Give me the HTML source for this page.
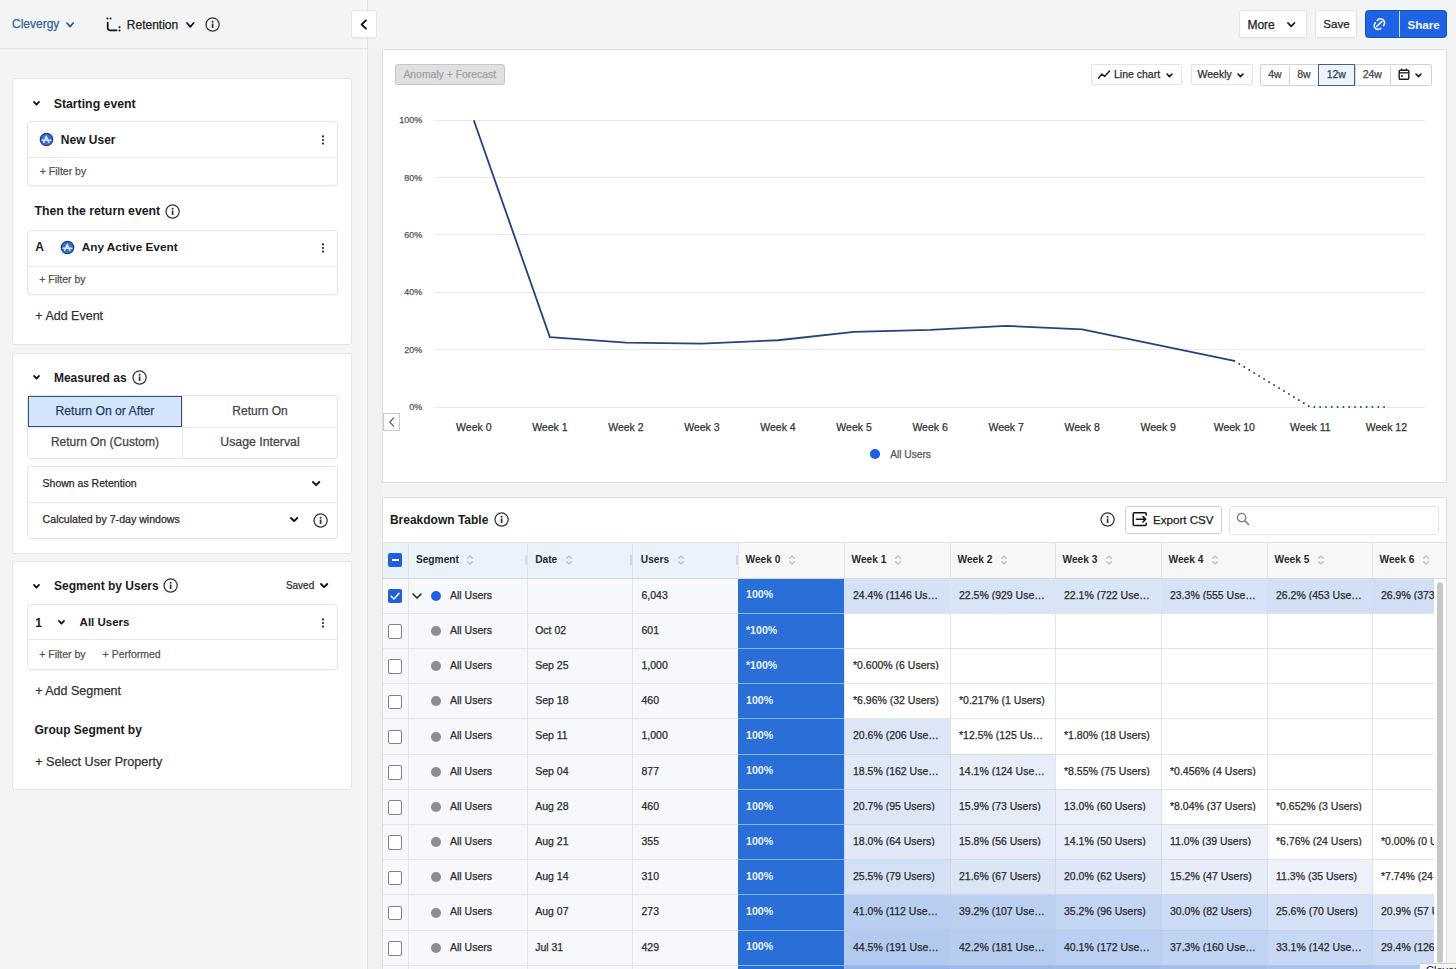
<!DOCTYPE html>
<html><head><meta charset="utf-8"><title>Retention</title>
<style>
html,body{margin:0;padding:0;}
body{width:1456px;height:969px;overflow:hidden;position:relative;background:#f3f4f6;font-family:"Liberation Sans", sans-serif;}
.t{position:absolute;white-space:nowrap;}
.n{-webkit-text-stroke:0.25px currentColor;}
.b{position:absolute;box-sizing:border-box;}
</style></head><body>
<div class="b" style="left:362px;top:0px;width:1px;height:969px;background:#eceef0;"></div>
<div class="b" style="left:363px;top:0px;width:4px;height:969px;background:#f6f7f9;"></div>
<div class="b" style="left:367px;top:0px;width:1px;height:969px;background:#e1e3e6;"></div>
<div class="b" style="left:368px;top:50px;width:14px;height:919px;background:#f0f1f3;"></div>
<div class="b" style="left:0;top:0;width:367px;height:49px;border-bottom:1px solid #e1e3e6;"></div>
<div class="t n" style="left:12.00px;top:18.44px;font-size:12px;line-height:12px;font-weight:normal;color:#3562a0;">Clevergy</div>
<svg class="b" style="left:64.9px;top:20.8px;" width="10.2" height="7.6" viewBox="0 0 10.2 7.6"><polyline points="2,2 5.1,5.6 8.2,2" fill="none" stroke="#2d5a96" stroke-width="1.7" stroke-linecap="round" stroke-linejoin="round"/></svg>
<svg class="b" style="left:104px;top:15px;" width="20" height="18" viewBox="0 0 20 18"><path d="M3.7 7.6 V13.1 Q3.7 15.3 5.9 15.3 H12.6" fill="none" stroke="#111" stroke-width="1.7" stroke-linecap="round"/><circle cx="3.4" cy="3.6" r="1" fill="#111"/><circle cx="6.5" cy="3.6" r="1" fill="#111"/><circle cx="15.5" cy="12.3" r="1" fill="#111"/><circle cx="15.5" cy="15.4" r="1" fill="#111"/></svg>
<div class="t n" style="left:126.80px;top:18.54px;font-size:12px;line-height:12px;font-weight:normal;color:#222;">Retention</div>
<svg class="b" style="left:185.29999999999998px;top:20.8px;" width="10.6" height="7.8" viewBox="0 0 10.6 7.8"><polyline points="2,2 5.3,5.8 8.6,2" fill="none" stroke="#1b1b1b" stroke-width="1.8" stroke-linecap="round" stroke-linejoin="round"/></svg>
<svg class="b" style="left:204.4px;top:16.0px;" width="17.2" height="17.2" viewBox="0 0 17.2 17.2"><circle cx="8.6" cy="8.6" r="6.6" fill="none" stroke="#333" stroke-width="1.25"/><circle cx="8.6" cy="5.8" r="1.05" fill="#333"/><rect x="7.75" y="7.5" width="1.7" height="4.5" fill="#333"/></svg>
<div class="b" style="left:351px;top:10px;width:26px;height:27.5px;background:#fff;border:1px solid #e3e5e8;border-radius:2px;box-shadow:0 1px 1px rgba(0,0,0,0.05);"></div>
<svg class="b" style="left:358px;top:18px;" width="12" height="14" viewBox="0 0 12 14"><polyline points="8,2.3 3.6,6.5 8,10.7" fill="none" stroke="#111" stroke-width="1.8" stroke-linecap="round" stroke-linejoin="round"/></svg>
<div class="b" style="left:1239px;top:10px;width:68px;height:27.5px;background:#fff;border:1px solid #e3e5e8;border-radius:2px;box-shadow:0 1px 1px rgba(0,0,0,0.04);"></div>
<div class="t n" style="left:1247.40px;top:18.54px;font-size:12px;line-height:12px;font-weight:normal;color:#222;">More</div>
<svg class="b" style="left:1286.3999999999999px;top:20.8px;" width="10.4" height="7.4" viewBox="0 0 10.4 7.4"><polyline points="2,2 5.2,5.4 8.4,2" fill="none" stroke="#1b1b1b" stroke-width="1.8" stroke-linecap="round" stroke-linejoin="round"/></svg>
<div class="b" style="left:1315px;top:10px;width:42px;height:27.5px;background:#fff;border:1px solid #e3e5e8;border-radius:2px;box-shadow:0 1px 1px rgba(0,0,0,0.04);"></div>
<div class="t n" style="left:1323.30px;top:18.48px;font-size:11.6px;line-height:11.6px;font-weight:normal;color:#222;">Save</div>
<div class="b" style="left:1365px;top:10px;width:81.5px;height:27.5px;background:#1e62e6;border:1px solid #174fbf;border-radius:3.5px;"></div>
<div class="b" style="left:1399px;top:11px;width:1px;height:25.5px;background:#cfe0ff;"></div>
<svg class="b" style="left:1371px;top:16px;" width="16" height="16" viewBox="0 0 16 16"><g transform="translate(8.5 8.3) scale(1.15) translate(-8.5 -8.3)"><path d="M9.6 11.8 A3.32 3.32 0 0 1 4.9 7.1 M6.6 4.9 A3.55 3.55 0 0 1 12.1 9.4 M6.1 10.2 L10.4 5.9" fill="none" stroke="#e8f5ff" stroke-width="1.5" stroke-linecap="round"/></g></svg>
<div class="t" style="left:1407.50px;top:18.58px;font-size:11.6px;line-height:11.6px;font-weight:bold;color:#f4f9ff;">Share</div>
<div class="b" style="left:12px;top:78px;width:340px;height:267px;background:#fff;border:1px solid #e3e5e8;border-radius:3px;"></div>
<svg class="b" style="left:32.2px;top:100.10000000000001px;" width="9" height="6.6" viewBox="0 0 9 6.6"><polyline points="2,2 4.5,4.6 7,2" fill="none" stroke="#111" stroke-width="1.8" stroke-linecap="round" stroke-linejoin="round"/></svg>
<div class="t" style="left:53.70px;top:97.58px;font-size:12.3px;line-height:12.3px;font-weight:bold;color:#1b1b1b;">Starting event</div>
<div class="b" style="left:27px;top:121px;width:311px;height:65px;background:#fff;border:1px solid #e3e5e8;border-radius:4px;box-shadow:0 1px 1px rgba(0,0,0,0.04);"></div>
<div class="b" style="left:28px;top:157px;width:309px;height:1px;background:#e6e8eb;"></div>
<svg class="b" style="left:39.0px;top:131.5px;" width="15" height="15" viewBox="0 0 15 15"><circle cx="7.5" cy="7.5" r="6.2" fill="#3b6fd4" stroke="#1d3c8c" stroke-width="1.3"/><path d="M4.6 10.6 L7.2 4.2 L9.9 10.6 M3 8.2 L12 8.2" fill="none" stroke="#d6ecff" stroke-width="1.4" stroke-linecap="round" stroke-linejoin="round"/></svg>
<div class="t" style="left:60.80px;top:133.64px;font-size:12px;line-height:12px;font-weight:bold;color:#1b1b1b;">New User</div>
<svg class="b" style="left:320.3px;top:132.7px;" width="6" height="14" viewBox="0 0 6 14"><circle cx="3" cy="3.4" r="1.05" fill="#222"/><circle cx="3" cy="7" r="1.05" fill="#222"/><circle cx="3" cy="10.6" r="1.05" fill="#222"/></svg>
<div class="t n" style="left:39.80px;top:165.91px;font-size:10.5px;line-height:10.5px;font-weight:normal;color:#555;">+ Filter by</div>
<div class="t" style="left:34.50px;top:205.18px;font-size:12.3px;line-height:12.3px;font-weight:bold;color:#1b1b1b;">Then the return event</div>
<svg class="b" style="left:164.4px;top:202.6px;" width="17.2" height="17.2" viewBox="0 0 17.2 17.2"><circle cx="8.6" cy="8.6" r="6.6" fill="none" stroke="#333" stroke-width="1.25"/><circle cx="8.6" cy="5.8" r="1.05" fill="#333"/><rect x="7.75" y="7.5" width="1.7" height="4.5" fill="#333"/></svg>
<div class="b" style="left:27px;top:229.5px;width:311px;height:65px;background:#fff;border:1px solid #e3e5e8;border-radius:4px;box-shadow:0 1px 1px rgba(0,0,0,0.04);"></div>
<div class="b" style="left:28px;top:265.5px;width:309px;height:1px;background:#e6e8eb;"></div>
<div class="t" style="left:35.20px;top:241.44px;font-size:12px;line-height:12px;font-weight:bold;color:#1b1b1b;">A</div>
<svg class="b" style="left:59.7px;top:239.7px;" width="15" height="15" viewBox="0 0 15 15"><circle cx="7.5" cy="7.5" r="6.2" fill="#3b6fd4" stroke="#1d3c8c" stroke-width="1.3"/><path d="M4.6 10.6 L7.2 4.2 L9.9 10.6 M3 8.2 L12 8.2" fill="none" stroke="#d6ecff" stroke-width="1.4" stroke-linecap="round" stroke-linejoin="round"/></svg>
<div class="t" style="left:81.70px;top:241.61px;font-size:11.8px;line-height:11.8px;font-weight:bold;color:#1b1b1b;">Any Active Event</div>
<svg class="b" style="left:320.3px;top:240.7px;" width="6" height="14" viewBox="0 0 6 14"><circle cx="3" cy="3.4" r="1.05" fill="#222"/><circle cx="3" cy="7" r="1.05" fill="#222"/><circle cx="3" cy="10.6" r="1.05" fill="#222"/></svg>
<div class="t n" style="left:39.20px;top:274.31px;font-size:10.5px;line-height:10.5px;font-weight:normal;color:#555;">+ Filter by</div>
<div class="t n" style="left:35.30px;top:309.52px;font-size:12.5px;line-height:12.5px;font-weight:normal;color:#333;">+ Add Event</div>
<div class="b" style="left:12px;top:352.5px;width:340px;height:201px;background:#fff;border:1px solid #e3e5e8;border-radius:3px;"></div>
<svg class="b" style="left:32.2px;top:374.09999999999997px;" width="9" height="6.6" viewBox="0 0 9 6.6"><polyline points="2,2 4.5,4.6 7,2" fill="none" stroke="#111" stroke-width="1.8" stroke-linecap="round" stroke-linejoin="round"/></svg>
<div class="t" style="left:53.90px;top:371.74px;font-size:12px;line-height:12px;font-weight:bold;color:#1b1b1b;">Measured as</div>
<svg class="b" style="left:131.1px;top:368.7px;" width="17.2" height="17.2" viewBox="0 0 17.2 17.2"><circle cx="8.6" cy="8.6" r="6.6" fill="none" stroke="#333" stroke-width="1.25"/><circle cx="8.6" cy="5.8" r="1.05" fill="#333"/><rect x="7.75" y="7.5" width="1.7" height="4.5" fill="#333"/></svg>
<div class="b" style="left:27px;top:395px;width:311px;height:64px;background:#fff;border:1px solid #e3e5e8;border-radius:3px;"></div>
<div class="b" style="left:28px;top:426.5px;width:309px;height:1px;background:#e6e8eb;"></div>
<div class="b" style="left:182px;top:396px;width:1px;height:62px;background:#e6e8eb;"></div>
<div class="b" style="left:27.5px;top:395.5px;width:154.5px;height:31px;background:#d4e5fb;border:1px solid #38506f;"></div>
<div class="t n" style="left:-95.10px;width:400px;text-align:center;top:404.97px;font-size:12.2px;line-height:12.2px;font-weight:normal;color:#1f3d66;">Return On or After</div>
<div class="t n" style="left:60.00px;width:400px;text-align:center;top:405.14px;font-size:12px;line-height:12px;font-weight:normal;color:#444;">Return On</div>
<div class="t n" style="left:-95.10px;width:400px;text-align:center;top:436.24px;font-size:12px;line-height:12px;font-weight:normal;color:#444;">Return On (Custom)</div>
<div class="t n" style="left:60.00px;width:400px;text-align:center;top:435.98px;font-size:12.3px;line-height:12.3px;font-weight:normal;color:#444;">Usage Interval</div>
<div class="b" style="left:27px;top:466px;width:311px;height:72.5px;background:#fff;border:1px solid #e3e5e8;border-radius:4px;box-shadow:0 1px 1px rgba(0,0,0,0.04);"></div>
<div class="b" style="left:28px;top:501.5px;width:309px;height:1px;background:#e6e8eb;"></div>
<div class="t n" style="left:42.60px;top:478.41px;font-size:10.5px;line-height:10.5px;font-weight:normal;color:#2b2b2b;">Shown as Retention</div>
<svg class="b" style="left:310.85px;top:480.25px;" width="10.3" height="7.1" viewBox="0 0 10.3 7.1"><polyline points="2,2 5.15,5.1 8.3,2" fill="none" stroke="#111" stroke-width="1.9" stroke-linecap="round" stroke-linejoin="round"/></svg>
<div class="t n" style="left:42.60px;top:514.32px;font-size:10.6px;line-height:10.6px;font-weight:normal;color:#2b2b2b;">Calculated by 7-day windows</div>
<svg class="b" style="left:288.85px;top:516.45px;" width="10.3" height="7.1" viewBox="0 0 10.3 7.1"><polyline points="2,2 5.15,5.1 8.3,2" fill="none" stroke="#111" stroke-width="1.9" stroke-linecap="round" stroke-linejoin="round"/></svg>
<svg class="b" style="left:312.29999999999995px;top:511.6px;" width="17.2" height="17.2" viewBox="0 0 17.2 17.2"><circle cx="8.6" cy="8.6" r="6.6" fill="none" stroke="#333" stroke-width="1.25"/><circle cx="8.6" cy="5.8" r="1.05" fill="#333"/><rect x="7.75" y="7.5" width="1.7" height="4.5" fill="#333"/></svg>
<div class="b" style="left:12px;top:561px;width:340px;height:228.5px;background:#fff;border:1px solid #e3e5e8;border-radius:3px;"></div>
<svg class="b" style="left:32.2px;top:582.9000000000001px;" width="9" height="6.6" viewBox="0 0 9 6.6"><polyline points="2,2 4.5,4.6 7,2" fill="none" stroke="#111" stroke-width="1.8" stroke-linecap="round" stroke-linejoin="round"/></svg>
<div class="t" style="left:54.00px;top:580.04px;font-size:12px;line-height:12px;font-weight:bold;color:#1b1b1b;">Segment by Users</div>
<svg class="b" style="left:162.0px;top:577.4px;" width="17.2" height="17.2" viewBox="0 0 17.2 17.2"><circle cx="8.6" cy="8.6" r="6.6" fill="none" stroke="#333" stroke-width="1.25"/><circle cx="8.6" cy="5.8" r="1.05" fill="#333"/><rect x="7.75" y="7.5" width="1.7" height="4.5" fill="#333"/></svg>
<div class="t n" style="left:285.90px;top:581.13px;font-size:10px;line-height:10px;font-weight:normal;color:#333;">Saved</div>
<svg class="b" style="left:318.55px;top:582.0500000000001px;" width="10.3" height="7.1" viewBox="0 0 10.3 7.1"><polyline points="2,2 5.15,5.1 8.3,2" fill="none" stroke="#111" stroke-width="1.9" stroke-linecap="round" stroke-linejoin="round"/></svg>
<div class="b" style="left:27px;top:603.5px;width:311px;height:66.5px;background:#fff;border:1px solid #e3e5e8;border-radius:4px;box-shadow:0 1px 1px rgba(0,0,0,0.04);"></div>
<div class="b" style="left:28px;top:639px;width:309px;height:1px;background:#e6e8eb;"></div>
<div class="t" style="left:35.20px;top:616.64px;font-size:12px;line-height:12px;font-weight:bold;color:#1b1b1b;">1</div>
<svg class="b" style="left:57.1px;top:619.0px;" width="9" height="6.6" viewBox="0 0 9 6.6"><polyline points="2,2 4.5,4.6 7,2" fill="none" stroke="#111" stroke-width="1.8" stroke-linecap="round" stroke-linejoin="round"/></svg>
<div class="t" style="left:79.60px;top:617.06px;font-size:11.5px;line-height:11.5px;font-weight:bold;color:#1b1b1b;">All Users</div>
<svg class="b" style="left:320.3px;top:615.5px;" width="6" height="14" viewBox="0 0 6 14"><circle cx="3" cy="3.4" r="1.05" fill="#222"/><circle cx="3" cy="7" r="1.05" fill="#222"/><circle cx="3" cy="10.6" r="1.05" fill="#222"/></svg>
<div class="t n" style="left:39.20px;top:648.91px;font-size:10.5px;line-height:10.5px;font-weight:normal;color:#555;">+ Filter by</div>
<div class="t n" style="left:102.60px;top:648.91px;font-size:10.5px;line-height:10.5px;font-weight:normal;color:#555;">+ Performed</div>
<div class="t n" style="left:35.20px;top:684.91px;font-size:12.5px;line-height:12.5px;font-weight:normal;color:#333;">+ Add Segment</div>
<div class="t" style="left:34.50px;top:723.84px;font-size:12px;line-height:12px;font-weight:bold;color:#1b1b1b;">Group Segment by</div>
<div class="t n" style="left:35.20px;top:755.53px;font-size:12.6px;line-height:12.6px;font-weight:normal;color:#333;">+ Select User Property</div>
<div class="b" style="left:382px;top:49px;width:1065px;height:434px;background:#fff;border:1px solid #dcdfe2;border-radius:1px;"></div>
<div class="b" style="left:395px;top:64px;width:110px;height:21px;background:#dfe0e2;border:1px solid #c3c5c8;border-radius:3px;"></div>
<div class="t n" style="left:403.40px;top:69.79px;font-size:10.4px;line-height:10.4px;font-weight:normal;color:#a0a2a6;">Anomaly + Forecast</div>
<div class="b" style="left:1090.5px;top:64px;width:91px;height:21px;background:#fff;border:1px solid #e3e5e8;border-radius:2px;"></div>
<svg class="b" style="left:1096px;top:67px;" width="16" height="14" viewBox="0 0 16 14"><polyline points="2.5,11 6,7 8.5,9.5 13.5,4" fill="none" stroke="#222" stroke-width="1.5" stroke-linecap="round" stroke-linejoin="round"/></svg>
<div class="t n" style="left:1114.00px;top:69.01px;font-size:10.5px;line-height:10.5px;font-weight:normal;color:#2b2b2b;">Line chart</div>
<svg class="b" style="left:1164.5px;top:71.7px;" width="9" height="6.6" viewBox="0 0 9 6.6"><polyline points="2,2 4.5,4.6 7,2" fill="none" stroke="#1b1b1b" stroke-width="1.6" stroke-linecap="round" stroke-linejoin="round"/></svg>
<div class="b" style="left:1190.5px;top:64px;width:62px;height:21px;background:#fff;border:1px solid #e3e5e8;border-radius:2px;"></div>
<div class="t n" style="left:1197.50px;top:69.01px;font-size:10.5px;line-height:10.5px;font-weight:normal;color:#2b2b2b;">Weekly</div>
<svg class="b" style="left:1235.5px;top:71.7px;" width="9" height="6.6" viewBox="0 0 9 6.6"><polyline points="2,2 4.5,4.6 7,2" fill="none" stroke="#1b1b1b" stroke-width="1.6" stroke-linecap="round" stroke-linejoin="round"/></svg>
<div class="b" style="left:1260px;top:64px;width:172px;height:21.5px;background:#fff;border:1px solid #cfd1d4;border-radius:2px;"></div>
<div class="b" style="left:1289px;top:65px;width:1px;height:20px;background:#d5d7da;"></div>
<div class="b" style="left:1354.5px;top:65px;width:1px;height:20px;background:#d5d7da;"></div>
<div class="b" style="left:1390px;top:65px;width:1px;height:20px;background:#d5d7da;"></div>
<div class="b" style="left:1318px;top:64px;width:37px;height:21.5px;background:#eef4fd;border:1px solid #4a5f82;"></div>
<div class="t n" style="left:1075.00px;width:400px;text-align:center;top:69.21px;font-size:10.5px;line-height:10.5px;font-weight:normal;color:#444;">4w</div>
<div class="t n" style="left:1104.00px;width:400px;text-align:center;top:69.21px;font-size:10.5px;line-height:10.5px;font-weight:normal;color:#444;">8w</div>
<div class="t n" style="left:1136.30px;width:400px;text-align:center;top:69.21px;font-size:10.5px;line-height:10.5px;font-weight:normal;color:#2c4266;">12w</div>
<div class="t n" style="left:1172.30px;width:400px;text-align:center;top:69.21px;font-size:10.5px;line-height:10.5px;font-weight:normal;color:#444;">24w</div>
<svg class="b" style="left:1397px;top:67px;" width="14" height="14" viewBox="0 0 14 14"><rect x="2.2" y="3.2" width="9.6" height="9" rx="1" fill="none" stroke="#1b1b1b" stroke-width="1.4"/><line x1="2.2" y1="5.8" x2="11.8" y2="5.8" stroke="#1b1b1b" stroke-width="1.3"/><line x1="4.6" y1="1.6" x2="4.6" y2="3.5" stroke="#1b1b1b" stroke-width="1.3"/><line x1="9.4" y1="1.6" x2="9.4" y2="3.5" stroke="#1b1b1b" stroke-width="1.3"/><circle cx="5" cy="9" r="1" fill="#1b1b1b"/></svg>
<svg class="b" style="left:1413.8px;top:71.7px;" width="9" height="6.6" viewBox="0 0 9 6.6"><polyline points="2,2 4.5,4.6 7,2" fill="none" stroke="#1b1b1b" stroke-width="1.6" stroke-linecap="round" stroke-linejoin="round"/></svg>
<div class="b" style="left:435px;top:120px;width:990px;height:1px;background:#e8e9eb;"></div>
<div class="t n" style="left:22.30px;width:400px;text-align:right;top:116.38px;font-size:9px;line-height:9px;font-weight:normal;color:#555;">100%</div>
<div class="b" style="left:435px;top:177px;width:990px;height:1px;background:#e8e9eb;"></div>
<div class="t n" style="left:22.30px;width:400px;text-align:right;top:173.73px;font-size:9px;line-height:9px;font-weight:normal;color:#555;">80%</div>
<div class="b" style="left:435px;top:234px;width:990px;height:1px;background:#e8e9eb;"></div>
<div class="t n" style="left:22.30px;width:400px;text-align:right;top:231.08px;font-size:9px;line-height:9px;font-weight:normal;color:#555;">60%</div>
<div class="b" style="left:435px;top:292px;width:990px;height:1px;background:#e8e9eb;"></div>
<div class="t n" style="left:22.30px;width:400px;text-align:right;top:288.43px;font-size:9px;line-height:9px;font-weight:normal;color:#555;">40%</div>
<div class="b" style="left:435px;top:349px;width:990px;height:1px;background:#e8e9eb;"></div>
<div class="t n" style="left:22.30px;width:400px;text-align:right;top:345.78px;font-size:9px;line-height:9px;font-weight:normal;color:#555;">20%</div>
<div class="b" style="left:435px;top:407px;width:990px;height:1px;background:#e8e9eb;"></div>
<div class="t n" style="left:22.30px;width:400px;text-align:right;top:403.13px;font-size:9px;line-height:9px;font-weight:normal;color:#555;">0%</div>
<div class="t n" style="left:273.80px;width:400px;text-align:center;top:422.01px;font-size:10.5px;line-height:10.5px;font-weight:normal;color:#333;">Week 0</div>
<div class="t n" style="left:349.85px;width:400px;text-align:center;top:422.01px;font-size:10.5px;line-height:10.5px;font-weight:normal;color:#333;">Week 1</div>
<div class="t n" style="left:425.90px;width:400px;text-align:center;top:422.01px;font-size:10.5px;line-height:10.5px;font-weight:normal;color:#333;">Week 2</div>
<div class="t n" style="left:501.95px;width:400px;text-align:center;top:422.01px;font-size:10.5px;line-height:10.5px;font-weight:normal;color:#333;">Week 3</div>
<div class="t n" style="left:578.00px;width:400px;text-align:center;top:422.01px;font-size:10.5px;line-height:10.5px;font-weight:normal;color:#333;">Week 4</div>
<div class="t n" style="left:654.05px;width:400px;text-align:center;top:422.01px;font-size:10.5px;line-height:10.5px;font-weight:normal;color:#333;">Week 5</div>
<div class="t n" style="left:730.10px;width:400px;text-align:center;top:422.01px;font-size:10.5px;line-height:10.5px;font-weight:normal;color:#333;">Week 6</div>
<div class="t n" style="left:806.15px;width:400px;text-align:center;top:422.01px;font-size:10.5px;line-height:10.5px;font-weight:normal;color:#333;">Week 7</div>
<div class="t n" style="left:882.20px;width:400px;text-align:center;top:422.01px;font-size:10.5px;line-height:10.5px;font-weight:normal;color:#333;">Week 8</div>
<div class="t n" style="left:958.25px;width:400px;text-align:center;top:422.01px;font-size:10.5px;line-height:10.5px;font-weight:normal;color:#333;">Week 9</div>
<div class="t n" style="left:1034.30px;width:400px;text-align:center;top:422.01px;font-size:10.5px;line-height:10.5px;font-weight:normal;color:#333;">Week 10</div>
<div class="t n" style="left:1110.35px;width:400px;text-align:center;top:422.01px;font-size:10.5px;line-height:10.5px;font-weight:normal;color:#333;">Week 11</div>
<div class="t n" style="left:1186.40px;width:400px;text-align:center;top:422.01px;font-size:10.5px;line-height:10.5px;font-weight:normal;color:#333;">Week 12</div>
<svg class="b" style="left:0;top:0" width="1456" height="969"><polyline points="473.80,120.30 549.85,337.08 625.90,342.53 701.95,343.68 778.00,340.24 854.05,331.92 930.10,329.91 1006.15,325.90 1082.20,329.34 1158.25,345.11 1234.30,360.88" fill="none" stroke="#28427c" stroke-width="1.8" stroke-linejoin="round"/><polyline points="1234.30,360.88 1310.35,407.05 1386.40,407.05" fill="none" stroke="#28427c" stroke-width="1.9" stroke-dasharray="0.01 5.8" stroke-linecap="round"/></svg>
<div class="b" style="left:383px;top:412.5px;width:17px;height:18px;background:#fff;border:1px solid #c8cacd;"></div>
<svg class="b" style="left:386px;top:416px;" width="12" height="12" viewBox="0 0 12 12"><polyline points="7.5,2 3.8,6 7.5,10" fill="none" stroke="#666" stroke-width="1.2" stroke-linecap="round"/></svg>
<svg class="b" style="left:869px;top:448px;" width="12" height="12" viewBox="0 0 12 12"><circle cx="6" cy="6" r="5.1" fill="#1f5fe6"/></svg>
<div class="t n" style="left:890.20px;top:449.76px;font-size:10.2px;line-height:10.2px;font-weight:normal;color:#555;">All Users</div>
<div class="b" style="left:382px;top:497px;width:1065px;height:480px;background:#fff;border:1px solid #dcdfe2;border-radius:1px;"></div>
<div class="t" style="left:389.90px;top:513.94px;font-size:12px;line-height:12px;font-weight:bold;color:#1b1b1b;">Breakdown Table</div>
<svg class="b" style="left:493.29999999999995px;top:510.6px;" width="17.2" height="17.2" viewBox="0 0 17.2 17.2"><circle cx="8.6" cy="8.6" r="6.6" fill="none" stroke="#333" stroke-width="1.25"/><circle cx="8.6" cy="5.8" r="1.05" fill="#333"/><rect x="7.75" y="7.5" width="1.7" height="4.5" fill="#333"/></svg>
<svg class="b" style="left:1099.2px;top:510.6px;" width="17.2" height="17.2" viewBox="0 0 17.2 17.2"><circle cx="8.6" cy="8.6" r="6.6" fill="none" stroke="#333" stroke-width="1.25"/><circle cx="8.6" cy="5.8" r="1.05" fill="#333"/><rect x="7.75" y="7.5" width="1.7" height="4.5" fill="#333"/></svg>
<div class="b" style="left:1124.5px;top:506px;width:97px;height:27.5px;background:#fff;border:1px solid #cfd1d4;border-radius:3px;"></div>
<svg class="b" style="left:1131px;top:511px;" width="18" height="18" viewBox="0 0 18 18"><path d="M15.2 3.9 V2.7 Q15.2 1.7 14.2 1.7 H3.2 Q2.2 1.7 2.2 2.7 V13.6 Q2.2 14.6 3.2 14.6 H14.2 Q15.2 14.6 15.2 13.6 V12.2" fill="none" stroke="#111" stroke-width="1.5" stroke-linecap="round"/><path d="M5.4 8.3 H14.4 M12 5.6 L14.7 8.3 L12 11" fill="none" stroke="#111" stroke-width="1.5" stroke-linecap="round" stroke-linejoin="round"/></svg>
<div class="t n" style="left:1153.00px;top:514.28px;font-size:11.6px;line-height:11.6px;font-weight:normal;color:#222;">Export CSV</div>
<div class="b" style="left:1229px;top:505.5px;width:210px;height:29px;background:#fff;border:1px solid #e3e5e8;border-radius:3px;"></div>
<svg class="b" style="left:1235px;top:511px;" width="16" height="16" viewBox="0 0 16 16"><circle cx="6.6" cy="6.6" r="4.2" fill="none" stroke="#777" stroke-width="1.3"/><line x1="9.7" y1="9.7" x2="13.6" y2="13.6" stroke="#777" stroke-width="1.4" stroke-linecap="round"/></svg>
<div class="b" style="left:383px;top:542px;width:1063px;height:427px;overflow:hidden;">
<div class="b" style="left:-1.00px;top:0.00px;width:356.00px;height:36.00px;background:#eaf2fc;"></div>
<div class="b" style="left:355.00px;top:0.00px;width:762.00px;height:36.00px;background:#f7f7f8;"></div>
<div class="b" style="left:-1.00px;top:0.00px;width:1200.00px;height:1.00px;background:#dfe1e4;"></div>
<div class="b" style="left:-1.00px;top:36.00px;width:1200.00px;height:1.00px;background:#d9dcdf;"></div>
<div class="b" style="left:25.00px;top:0.00px;width:1.00px;height:36.00px;background:#e0e3e6;"></div>
<div class="b" style="left:144.00px;top:0.00px;width:1.00px;height:36.00px;background:#e0e3e6;"></div>
<div class="b" style="left:249.00px;top:0.00px;width:1.00px;height:36.00px;background:#e0e3e6;"></div>
<div class="b" style="left:355.00px;top:0.00px;width:1.00px;height:36.00px;background:#e0e3e6;"></div>
<div class="b" style="left:461.00px;top:0.00px;width:1.00px;height:36.00px;background:#e0e3e6;"></div>
<div class="b" style="left:567.00px;top:0.00px;width:1.00px;height:36.00px;background:#e0e3e6;"></div>
<div class="b" style="left:672.00px;top:0.00px;width:1.00px;height:36.00px;background:#e0e3e6;"></div>
<div class="b" style="left:778.00px;top:0.00px;width:1.00px;height:36.00px;background:#e0e3e6;"></div>
<div class="b" style="left:884.00px;top:0.00px;width:1.00px;height:36.00px;background:#e0e3e6;"></div>
<div class="b" style="left:989.00px;top:0.00px;width:1.00px;height:36.00px;background:#e0e3e6;"></div>
<div class="b" style="left:1095.00px;top:0.00px;width:1.00px;height:36.00px;background:#e0e3e6;"></div>
<div class="b" style="left:142.00px;top:13.00px;width:2.00px;height:9.50px;background:#d3d6da;border-radius:1px;"></div>
<div class="b" style="left:247.00px;top:13.00px;width:2.00px;height:9.50px;background:#d3d6da;border-radius:1px;"></div>
<div class="b" style="left:353.00px;top:13.00px;width:2.00px;height:9.50px;background:#d3d6da;border-radius:1px;"></div>
<div class="b" style="left:5.00px;top:11.00px;width:14.00px;height:14.00px;background:#1f5fdc;border-radius:2px;"></div>
<div class="b" style="left:8.50px;top:17.30px;width:7.00px;height:1.50px;background:#fff;"></div>
<div class="t" style="left:32.90px;top:12.56px;font-size:10.2px;line-height:10.2px;font-weight:bold;color:#2a2a2a;">Segment<span style="position:relative;display:inline-block;width:15px;height:0"><svg style="position:absolute;left:7.5px;top:-9px" width="8" height="12" viewBox="0 0 8 12"><path d="M1.7 4.3 L4 2 L6.3 4.3" fill="none" stroke="#c0c2c5" stroke-width="1.4" stroke-linecap="round" stroke-linejoin="round"/><path d="M1.7 7.7 L4 10 L6.3 7.7" fill="none" stroke="#c0c2c5" stroke-width="1.4" stroke-linecap="round" stroke-linejoin="round"/></svg></span></div>
<div class="t" style="left:152.20px;top:12.56px;font-size:10.2px;line-height:10.2px;font-weight:bold;color:#2a2a2a;">Date<span style="position:relative;display:inline-block;width:15px;height:0"><svg style="position:absolute;left:7.5px;top:-9px" width="8" height="12" viewBox="0 0 8 12"><path d="M1.7 4.3 L4 2 L6.3 4.3" fill="none" stroke="#c0c2c5" stroke-width="1.4" stroke-linecap="round" stroke-linejoin="round"/><path d="M1.7 7.7 L4 10 L6.3 7.7" fill="none" stroke="#c0c2c5" stroke-width="1.4" stroke-linecap="round" stroke-linejoin="round"/></svg></span></div>
<div class="t" style="left:257.80px;top:12.56px;font-size:10.2px;line-height:10.2px;font-weight:bold;color:#2a2a2a;">Users<span style="position:relative;display:inline-block;width:15px;height:0"><svg style="position:absolute;left:7.5px;top:-9px" width="8" height="12" viewBox="0 0 8 12"><path d="M1.7 4.3 L4 2 L6.3 4.3" fill="none" stroke="#c0c2c5" stroke-width="1.4" stroke-linecap="round" stroke-linejoin="round"/><path d="M1.7 7.7 L4 10 L6.3 7.7" fill="none" stroke="#c0c2c5" stroke-width="1.4" stroke-linecap="round" stroke-linejoin="round"/></svg></span></div>
<div class="t" style="left:362.50px;top:12.56px;font-size:10.2px;line-height:10.2px;font-weight:bold;color:#2a2a2a;">Week 0<span style="position:relative;display:inline-block;width:15px;height:0"><svg style="position:absolute;left:7.5px;top:-9px" width="8" height="12" viewBox="0 0 8 12"><path d="M1.7 4.3 L4 2 L6.3 4.3" fill="none" stroke="#c0c2c5" stroke-width="1.4" stroke-linecap="round" stroke-linejoin="round"/><path d="M1.7 7.7 L4 10 L6.3 7.7" fill="none" stroke="#c0c2c5" stroke-width="1.4" stroke-linecap="round" stroke-linejoin="round"/></svg></span></div>
<div class="t" style="left:468.50px;top:12.56px;font-size:10.2px;line-height:10.2px;font-weight:bold;color:#2a2a2a;">Week 1<span style="position:relative;display:inline-block;width:15px;height:0"><svg style="position:absolute;left:7.5px;top:-9px" width="8" height="12" viewBox="0 0 8 12"><path d="M1.7 4.3 L4 2 L6.3 4.3" fill="none" stroke="#c0c2c5" stroke-width="1.4" stroke-linecap="round" stroke-linejoin="round"/><path d="M1.7 7.7 L4 10 L6.3 7.7" fill="none" stroke="#c0c2c5" stroke-width="1.4" stroke-linecap="round" stroke-linejoin="round"/></svg></span></div>
<div class="t" style="left:574.50px;top:12.56px;font-size:10.2px;line-height:10.2px;font-weight:bold;color:#2a2a2a;">Week 2<span style="position:relative;display:inline-block;width:15px;height:0"><svg style="position:absolute;left:7.5px;top:-9px" width="8" height="12" viewBox="0 0 8 12"><path d="M1.7 4.3 L4 2 L6.3 4.3" fill="none" stroke="#c0c2c5" stroke-width="1.4" stroke-linecap="round" stroke-linejoin="round"/><path d="M1.7 7.7 L4 10 L6.3 7.7" fill="none" stroke="#c0c2c5" stroke-width="1.4" stroke-linecap="round" stroke-linejoin="round"/></svg></span></div>
<div class="t" style="left:679.50px;top:12.56px;font-size:10.2px;line-height:10.2px;font-weight:bold;color:#2a2a2a;">Week 3<span style="position:relative;display:inline-block;width:15px;height:0"><svg style="position:absolute;left:7.5px;top:-9px" width="8" height="12" viewBox="0 0 8 12"><path d="M1.7 4.3 L4 2 L6.3 4.3" fill="none" stroke="#c0c2c5" stroke-width="1.4" stroke-linecap="round" stroke-linejoin="round"/><path d="M1.7 7.7 L4 10 L6.3 7.7" fill="none" stroke="#c0c2c5" stroke-width="1.4" stroke-linecap="round" stroke-linejoin="round"/></svg></span></div>
<div class="t" style="left:785.50px;top:12.56px;font-size:10.2px;line-height:10.2px;font-weight:bold;color:#2a2a2a;">Week 4<span style="position:relative;display:inline-block;width:15px;height:0"><svg style="position:absolute;left:7.5px;top:-9px" width="8" height="12" viewBox="0 0 8 12"><path d="M1.7 4.3 L4 2 L6.3 4.3" fill="none" stroke="#c0c2c5" stroke-width="1.4" stroke-linecap="round" stroke-linejoin="round"/><path d="M1.7 7.7 L4 10 L6.3 7.7" fill="none" stroke="#c0c2c5" stroke-width="1.4" stroke-linecap="round" stroke-linejoin="round"/></svg></span></div>
<div class="t" style="left:891.50px;top:12.56px;font-size:10.2px;line-height:10.2px;font-weight:bold;color:#2a2a2a;">Week 5<span style="position:relative;display:inline-block;width:15px;height:0"><svg style="position:absolute;left:7.5px;top:-9px" width="8" height="12" viewBox="0 0 8 12"><path d="M1.7 4.3 L4 2 L6.3 4.3" fill="none" stroke="#c0c2c5" stroke-width="1.4" stroke-linecap="round" stroke-linejoin="round"/><path d="M1.7 7.7 L4 10 L6.3 7.7" fill="none" stroke="#c0c2c5" stroke-width="1.4" stroke-linecap="round" stroke-linejoin="round"/></svg></span></div>
<div class="t" style="left:996.50px;top:12.56px;font-size:10.2px;line-height:10.2px;font-weight:bold;color:#2a2a2a;">Week 6<span style="position:relative;display:inline-block;width:15px;height:0"><svg style="position:absolute;left:7.5px;top:-9px" width="8" height="12" viewBox="0 0 8 12"><path d="M1.7 4.3 L4 2 L6.3 4.3" fill="none" stroke="#c0c2c5" stroke-width="1.4" stroke-linecap="round" stroke-linejoin="round"/><path d="M1.7 7.7 L4 10 L6.3 7.7" fill="none" stroke="#c0c2c5" stroke-width="1.4" stroke-linecap="round" stroke-linejoin="round"/></svg></span></div>
<!--SORTS-->
<div class="b" style="left:-1.00px;top:36.00px;width:356.00px;height:35.20px;background:#f6f8fb;"></div>
<div class="b" style="left:355.00px;top:36.00px;width:105.70px;height:35.20px;background:#2a6fd8;"></div>
<div class="b" style="left:461.00px;top:36.00px;width:105.70px;height:35.20px;background:#d5e2f6;"></div>
<div class="b" style="left:567.00px;top:36.00px;width:105.70px;height:35.20px;background:#d9e4f6;"></div>
<div class="b" style="left:672.00px;top:36.00px;width:105.70px;height:35.20px;background:#dae5f6;"></div>
<div class="b" style="left:778.00px;top:36.00px;width:105.70px;height:35.20px;background:#d7e3f6;"></div>
<div class="b" style="left:884.00px;top:36.00px;width:105.70px;height:35.20px;background:#d2e0f5;"></div>
<div class="b" style="left:989.00px;top:36.00px;width:105.70px;height:35.20px;background:#d1dff5;"></div>
<div class="b" style="left:-1.00px;top:71.20px;width:356.00px;height:35.20px;background:#f6f8fb;"></div>
<div class="b" style="left:355.00px;top:71.20px;width:105.70px;height:35.20px;background:#2a6fd8;"></div>
<div class="b" style="left:461.00px;top:71.20px;width:105.70px;height:35.20px;background:#fff;"></div>
<div class="b" style="left:567.00px;top:71.20px;width:105.70px;height:35.20px;background:#fff;"></div>
<div class="b" style="left:672.00px;top:71.20px;width:105.70px;height:35.20px;background:#fff;"></div>
<div class="b" style="left:778.00px;top:71.20px;width:105.70px;height:35.20px;background:#fff;"></div>
<div class="b" style="left:884.00px;top:71.20px;width:105.70px;height:35.20px;background:#fff;"></div>
<div class="b" style="left:989.00px;top:71.20px;width:105.70px;height:35.20px;background:#fff;"></div>
<div class="b" style="left:-1.00px;top:106.40px;width:356.00px;height:35.20px;background:#f6f8fb;"></div>
<div class="b" style="left:355.00px;top:106.40px;width:105.70px;height:35.20px;background:#2a6fd8;"></div>
<div class="b" style="left:461.00px;top:106.40px;width:105.70px;height:35.20px;background:#fff;"></div>
<div class="b" style="left:567.00px;top:106.40px;width:105.70px;height:35.20px;background:#fff;"></div>
<div class="b" style="left:672.00px;top:106.40px;width:105.70px;height:35.20px;background:#fff;"></div>
<div class="b" style="left:778.00px;top:106.40px;width:105.70px;height:35.20px;background:#fff;"></div>
<div class="b" style="left:884.00px;top:106.40px;width:105.70px;height:35.20px;background:#fff;"></div>
<div class="b" style="left:989.00px;top:106.40px;width:105.70px;height:35.20px;background:#fff;"></div>
<div class="b" style="left:-1.00px;top:141.60px;width:356.00px;height:35.20px;background:#f6f8fb;"></div>
<div class="b" style="left:355.00px;top:141.60px;width:105.70px;height:35.20px;background:#2a6fd8;"></div>
<div class="b" style="left:461.00px;top:141.60px;width:105.70px;height:35.20px;background:#fff;"></div>
<div class="b" style="left:567.00px;top:141.60px;width:105.70px;height:35.20px;background:#fff;"></div>
<div class="b" style="left:672.00px;top:141.60px;width:105.70px;height:35.20px;background:#fff;"></div>
<div class="b" style="left:778.00px;top:141.60px;width:105.70px;height:35.20px;background:#fff;"></div>
<div class="b" style="left:884.00px;top:141.60px;width:105.70px;height:35.20px;background:#fff;"></div>
<div class="b" style="left:989.00px;top:141.60px;width:105.70px;height:35.20px;background:#fff;"></div>
<div class="b" style="left:-1.00px;top:176.80px;width:356.00px;height:35.20px;background:#f6f8fb;"></div>
<div class="b" style="left:355.00px;top:176.80px;width:105.70px;height:35.20px;background:#2a6fd8;"></div>
<div class="b" style="left:461.00px;top:176.80px;width:105.70px;height:35.20px;background:#dce6f7;"></div>
<div class="b" style="left:567.00px;top:176.80px;width:105.70px;height:35.20px;background:#fff;"></div>
<div class="b" style="left:672.00px;top:176.80px;width:105.70px;height:35.20px;background:#fff;"></div>
<div class="b" style="left:778.00px;top:176.80px;width:105.70px;height:35.20px;background:#fff;"></div>
<div class="b" style="left:884.00px;top:176.80px;width:105.70px;height:35.20px;background:#fff;"></div>
<div class="b" style="left:989.00px;top:176.80px;width:105.70px;height:35.20px;background:#fff;"></div>
<div class="b" style="left:-1.00px;top:212.00px;width:356.00px;height:35.20px;background:#f6f8fb;"></div>
<div class="b" style="left:355.00px;top:212.00px;width:105.70px;height:35.20px;background:#2a6fd8;"></div>
<div class="b" style="left:461.00px;top:212.00px;width:105.70px;height:35.20px;background:#e0e9f7;"></div>
<div class="b" style="left:567.00px;top:212.00px;width:105.70px;height:35.20px;background:#e8eef9;"></div>
<div class="b" style="left:672.00px;top:212.00px;width:105.70px;height:35.20px;background:#fff;"></div>
<div class="b" style="left:778.00px;top:212.00px;width:105.70px;height:35.20px;background:#fff;"></div>
<div class="b" style="left:884.00px;top:212.00px;width:105.70px;height:35.20px;background:#fff;"></div>
<div class="b" style="left:989.00px;top:212.00px;width:105.70px;height:35.20px;background:#fff;"></div>
<div class="b" style="left:-1.00px;top:247.20px;width:356.00px;height:35.20px;background:#f6f8fb;"></div>
<div class="b" style="left:355.00px;top:247.20px;width:105.70px;height:35.20px;background:#2a6fd8;"></div>
<div class="b" style="left:461.00px;top:247.20px;width:105.70px;height:35.20px;background:#dce6f7;"></div>
<div class="b" style="left:567.00px;top:247.20px;width:105.70px;height:35.20px;background:#e5ecf8;"></div>
<div class="b" style="left:672.00px;top:247.20px;width:105.70px;height:35.20px;background:#eaeff9;"></div>
<div class="b" style="left:778.00px;top:247.20px;width:105.70px;height:35.20px;background:#fff;"></div>
<div class="b" style="left:884.00px;top:247.20px;width:105.70px;height:35.20px;background:#fff;"></div>
<div class="b" style="left:989.00px;top:247.20px;width:105.70px;height:35.20px;background:#fff;"></div>
<div class="b" style="left:-1.00px;top:282.40px;width:356.00px;height:35.20px;background:#f6f8fb;"></div>
<div class="b" style="left:355.00px;top:282.40px;width:105.70px;height:35.20px;background:#2a6fd8;"></div>
<div class="b" style="left:461.00px;top:282.40px;width:105.70px;height:35.20px;background:#e1e9f8;"></div>
<div class="b" style="left:567.00px;top:282.40px;width:105.70px;height:35.20px;background:#e5ecf8;"></div>
<div class="b" style="left:672.00px;top:282.40px;width:105.70px;height:35.20px;background:#e8eef9;"></div>
<div class="b" style="left:778.00px;top:282.40px;width:105.70px;height:35.20px;background:#edf2fa;"></div>
<div class="b" style="left:884.00px;top:282.40px;width:105.70px;height:35.20px;background:#fff;"></div>
<div class="b" style="left:989.00px;top:282.40px;width:105.70px;height:35.20px;background:#fff;"></div>
<div class="b" style="left:-1.00px;top:317.60px;width:356.00px;height:35.20px;background:#f6f8fb;"></div>
<div class="b" style="left:355.00px;top:317.60px;width:105.70px;height:35.20px;background:#2a6fd8;"></div>
<div class="b" style="left:461.00px;top:317.60px;width:105.70px;height:35.20px;background:#d4e1f5;"></div>
<div class="b" style="left:567.00px;top:317.60px;width:105.70px;height:35.20px;background:#dae5f6;"></div>
<div class="b" style="left:672.00px;top:317.60px;width:105.70px;height:35.20px;background:#dde7f7;"></div>
<div class="b" style="left:778.00px;top:317.60px;width:105.70px;height:35.20px;background:#e6edf8;"></div>
<div class="b" style="left:884.00px;top:317.60px;width:105.70px;height:35.20px;background:#edf1fa;"></div>
<div class="b" style="left:989.00px;top:317.60px;width:105.70px;height:35.20px;background:#fff;"></div>
<div class="b" style="left:-1.00px;top:352.80px;width:356.00px;height:35.20px;background:#f6f8fb;"></div>
<div class="b" style="left:355.00px;top:352.80px;width:105.70px;height:35.20px;background:#2a6fd8;"></div>
<div class="b" style="left:461.00px;top:352.80px;width:105.70px;height:35.20px;background:#b8cef1;"></div>
<div class="b" style="left:567.00px;top:352.80px;width:105.70px;height:35.20px;background:#bbd0f1;"></div>
<div class="b" style="left:672.00px;top:352.80px;width:105.70px;height:35.20px;background:#c2d5f2;"></div>
<div class="b" style="left:778.00px;top:352.80px;width:105.70px;height:35.20px;background:#ccdbf4;"></div>
<div class="b" style="left:884.00px;top:352.80px;width:105.70px;height:35.20px;background:#d3e0f5;"></div>
<div class="b" style="left:989.00px;top:352.80px;width:105.70px;height:35.20px;background:#dce6f7;"></div>
<div class="b" style="left:-1.00px;top:388.00px;width:356.00px;height:35.20px;background:#f6f8fb;"></div>
<div class="b" style="left:355.00px;top:388.00px;width:105.70px;height:35.20px;background:#2a6fd8;"></div>
<div class="b" style="left:461.00px;top:388.00px;width:105.70px;height:35.20px;background:#b2caef;"></div>
<div class="b" style="left:567.00px;top:388.00px;width:105.70px;height:35.20px;background:#b6cdf0;"></div>
<div class="b" style="left:672.00px;top:388.00px;width:105.70px;height:35.20px;background:#bacff1;"></div>
<div class="b" style="left:778.00px;top:388.00px;width:105.70px;height:35.20px;background:#bfd3f2;"></div>
<div class="b" style="left:884.00px;top:388.00px;width:105.70px;height:35.20px;background:#c6d8f3;"></div>
<div class="b" style="left:989.00px;top:388.00px;width:105.70px;height:35.20px;background:#cddcf4;"></div>
<div class="b" style="left:-1.00px;top:423.20px;width:356.00px;height:35.20px;background:#f6f8fb;"></div>
<div class="b" style="left:355.00px;top:423.20px;width:105.70px;height:35.20px;background:#2a6fd8;"></div>
<div class="b" style="left:461.00px;top:423.20px;width:105.70px;height:35.20px;background:#93b5ea;"></div>
<div class="b" style="left:567.00px;top:423.20px;width:105.70px;height:35.20px;background:#9abaeb;"></div>
<div class="b" style="left:672.00px;top:423.20px;width:105.70px;height:35.20px;background:#9dbcec;"></div>
<div class="b" style="left:778.00px;top:423.20px;width:105.70px;height:35.20px;background:#a3c0ed;"></div>
<div class="b" style="left:884.00px;top:423.20px;width:105.70px;height:35.20px;background:#a8c3ee;"></div>
<div class="b" style="left:989.00px;top:423.20px;width:105.70px;height:35.20px;background:#adc7ef;"></div>
<div class="b" style="left:-1.00px;top:70.70px;width:356.00px;height:1.00px;background:#e3e6e9;"></div>
<div class="b" style="left:355.00px;top:70.70px;width:105.70px;height:1.00px;background:#7db9ff;"></div>
<div class="b" style="left:461.00px;top:70.70px;width:1200.00px;height:1.00px;background:rgba(190,198,210,0.45);"></div>
<div class="b" style="left:-1.00px;top:105.90px;width:356.00px;height:1.00px;background:#e3e6e9;"></div>
<div class="b" style="left:355.00px;top:105.90px;width:105.70px;height:1.00px;background:#7db9ff;"></div>
<div class="b" style="left:461.00px;top:105.90px;width:1200.00px;height:1.00px;background:rgba(190,198,210,0.45);"></div>
<div class="b" style="left:-1.00px;top:141.10px;width:356.00px;height:1.00px;background:#e3e6e9;"></div>
<div class="b" style="left:355.00px;top:141.10px;width:105.70px;height:1.00px;background:#7db9ff;"></div>
<div class="b" style="left:461.00px;top:141.10px;width:1200.00px;height:1.00px;background:rgba(190,198,210,0.45);"></div>
<div class="b" style="left:-1.00px;top:176.30px;width:356.00px;height:1.00px;background:#e3e6e9;"></div>
<div class="b" style="left:355.00px;top:176.30px;width:105.70px;height:1.00px;background:#7db9ff;"></div>
<div class="b" style="left:461.00px;top:176.30px;width:1200.00px;height:1.00px;background:rgba(190,198,210,0.45);"></div>
<div class="b" style="left:-1.00px;top:211.50px;width:356.00px;height:1.00px;background:#e3e6e9;"></div>
<div class="b" style="left:355.00px;top:211.50px;width:105.70px;height:1.00px;background:#7db9ff;"></div>
<div class="b" style="left:461.00px;top:211.50px;width:1200.00px;height:1.00px;background:rgba(190,198,210,0.45);"></div>
<div class="b" style="left:-1.00px;top:246.70px;width:356.00px;height:1.00px;background:#e3e6e9;"></div>
<div class="b" style="left:355.00px;top:246.70px;width:105.70px;height:1.00px;background:#7db9ff;"></div>
<div class="b" style="left:461.00px;top:246.70px;width:1200.00px;height:1.00px;background:rgba(190,198,210,0.45);"></div>
<div class="b" style="left:-1.00px;top:281.90px;width:356.00px;height:1.00px;background:#e3e6e9;"></div>
<div class="b" style="left:355.00px;top:281.90px;width:105.70px;height:1.00px;background:#7db9ff;"></div>
<div class="b" style="left:461.00px;top:281.90px;width:1200.00px;height:1.00px;background:rgba(190,198,210,0.45);"></div>
<div class="b" style="left:-1.00px;top:317.10px;width:356.00px;height:1.00px;background:#e3e6e9;"></div>
<div class="b" style="left:355.00px;top:317.10px;width:105.70px;height:1.00px;background:#7db9ff;"></div>
<div class="b" style="left:461.00px;top:317.10px;width:1200.00px;height:1.00px;background:rgba(190,198,210,0.45);"></div>
<div class="b" style="left:-1.00px;top:352.30px;width:356.00px;height:1.00px;background:#e3e6e9;"></div>
<div class="b" style="left:355.00px;top:352.30px;width:105.70px;height:1.00px;background:#7db9ff;"></div>
<div class="b" style="left:461.00px;top:352.30px;width:1200.00px;height:1.00px;background:rgba(190,198,210,0.45);"></div>
<div class="b" style="left:-1.00px;top:387.50px;width:356.00px;height:1.00px;background:#e3e6e9;"></div>
<div class="b" style="left:355.00px;top:387.50px;width:105.70px;height:1.00px;background:#7db9ff;"></div>
<div class="b" style="left:461.00px;top:387.50px;width:1200.00px;height:1.00px;background:rgba(190,198,210,0.45);"></div>
<div class="b" style="left:-1.00px;top:422.70px;width:356.00px;height:1.00px;background:#e3e6e9;"></div>
<div class="b" style="left:355.00px;top:422.70px;width:105.70px;height:1.00px;background:#7db9ff;"></div>
<div class="b" style="left:461.00px;top:422.70px;width:1200.00px;height:1.00px;background:rgba(190,198,210,0.45);"></div>
<div class="b" style="left:-1.00px;top:457.90px;width:356.00px;height:1.00px;background:#e3e6e9;"></div>
<div class="b" style="left:355.00px;top:457.90px;width:105.70px;height:1.00px;background:#7db9ff;"></div>
<div class="b" style="left:461.00px;top:457.90px;width:1200.00px;height:1.00px;background:rgba(190,198,210,0.45);"></div>
<div class="b" style="left:25.00px;top:36.00px;width:1.00px;height:969.00px;background:#e3e6e9;"></div>
<div class="b" style="left:144.00px;top:36.00px;width:1.00px;height:969.00px;background:#e3e6e9;"></div>
<div class="b" style="left:249.00px;top:36.00px;width:1.00px;height:969.00px;background:#e3e6e9;"></div>
<div class="b" style="left:461.00px;top:71.20px;width:1.00px;height:969.00px;background:rgba(190,198,210,0.45);"></div>
<div class="b" style="left:567.00px;top:71.20px;width:1.00px;height:969.00px;background:rgba(190,198,210,0.45);"></div>
<div class="b" style="left:672.00px;top:71.20px;width:1.00px;height:969.00px;background:rgba(190,198,210,0.45);"></div>
<div class="b" style="left:778.00px;top:71.20px;width:1.00px;height:969.00px;background:rgba(190,198,210,0.45);"></div>
<div class="b" style="left:884.00px;top:71.20px;width:1.00px;height:969.00px;background:rgba(190,198,210,0.45);"></div>
<div class="b" style="left:989.00px;top:71.20px;width:1.00px;height:969.00px;background:rgba(190,198,210,0.45);"></div>
<div class="b" style="left:1095.00px;top:71.20px;width:1.00px;height:969.00px;background:rgba(190,198,210,0.45);"></div>
<div class="b" style="left:-1.00px;top:35.50px;width:1200.00px;height:1.00px;background:#d5d8dc;"></div>
<div class="b" style="left:5.00px;top:47.00px;width:14.00px;height:14.00px;background:#1f5fdc;border-radius:2px;"></div>
<svg class="b" style="left:5.00px;top:47.00px" width="14" height="14" viewBox="0 0 14 14"><polyline points="3.2,7.3 6,10 11,4.2" fill="none" stroke="#fff" stroke-width="1.5" stroke-linecap="round" stroke-linejoin="round"/></svg>
<svg class="b" style="left:28.00px;top:49.00px" width="12" height="10" viewBox="0 0 12 10"><polyline points="2,3 6,7 10,3" fill="none" stroke="#222" stroke-width="1.5" stroke-linecap="round" stroke-linejoin="round"/></svg>
<svg class="b" style="left:47.00px;top:48.40px" width="12" height="12" viewBox="0 0 12 12"><circle cx="6" cy="6" r="5" fill="#1f5fe6"/></svg>
<div class="t n" style="left:67.00px;top:47.51px;font-size:10.5px;line-height:10.5px;font-weight:normal;color:#2b2b2b;">All Users</div>
<div class="t n" style="left:258.50px;top:47.51px;font-size:10.5px;line-height:10.5px;font-weight:normal;color:#2b2b2b;">6,043</div>
<div class="t" style="left:363.00px;top:47.42px;font-size:10.6px;line-height:10.6px;font-weight:bold;color:#eaf5ff;">100%</div>
<div class="t n" style="left:470.00px;top:47.51px;font-size:10.5px;line-height:10.5px;font-weight:normal;color:#2b2b2b;width:86.50px;overflow:hidden;text-overflow:ellipsis;">24.4% (1146 Users)</div>
<div class="t n" style="left:576.00px;top:47.51px;font-size:10.5px;line-height:10.5px;font-weight:normal;color:#2b2b2b;width:86.50px;overflow:hidden;text-overflow:ellipsis;">22.5% (929 Users)</div>
<div class="t n" style="left:681.00px;top:47.51px;font-size:10.5px;line-height:10.5px;font-weight:normal;color:#2b2b2b;width:86.50px;overflow:hidden;text-overflow:ellipsis;">22.1% (722 Users)</div>
<div class="t n" style="left:787.00px;top:47.51px;font-size:10.5px;line-height:10.5px;font-weight:normal;color:#2b2b2b;width:86.50px;overflow:hidden;text-overflow:ellipsis;">23.3% (555 Users)</div>
<div class="t n" style="left:893.00px;top:47.51px;font-size:10.5px;line-height:10.5px;font-weight:normal;color:#2b2b2b;width:86.50px;overflow:hidden;text-overflow:ellipsis;">26.2% (453 Users)</div>
<div class="t n" style="left:998.00px;top:47.51px;font-size:10.5px;line-height:10.5px;font-weight:normal;color:#2b2b2b;width:200.00px;overflow:hidden;text-overflow:ellipsis;">26.9% (373 Users)</div>
<div class="b" style="left:4.80px;top:82.20px;width:14.50px;height:14.50px;background:#fff;border:1.2px solid #7f8185;border-radius:2px;box-sizing:border-box;"></div>
<svg class="b" style="left:47.00px;top:82.90px" width="12" height="12" viewBox="0 0 12 12"><circle cx="6" cy="6" r="5" fill="#8c8d90"/></svg>
<div class="t n" style="left:67.00px;top:82.71px;font-size:10.5px;line-height:10.5px;font-weight:normal;color:#2b2b2b;">All Users</div>
<div class="t n" style="left:152.20px;top:82.71px;font-size:10.5px;line-height:10.5px;font-weight:normal;color:#2b2b2b;">Oct 02</div>
<div class="t n" style="left:258.50px;top:82.71px;font-size:10.5px;line-height:10.5px;font-weight:normal;color:#2b2b2b;">601</div>
<div class="t" style="left:363.00px;top:82.62px;font-size:10.6px;line-height:10.6px;font-weight:bold;color:#eaf5ff;">*100%</div>
<div class="b" style="left:4.80px;top:117.40px;width:14.50px;height:14.50px;background:#fff;border:1.2px solid #7f8185;border-radius:2px;box-sizing:border-box;"></div>
<svg class="b" style="left:47.00px;top:118.10px" width="12" height="12" viewBox="0 0 12 12"><circle cx="6" cy="6" r="5" fill="#8c8d90"/></svg>
<div class="t n" style="left:67.00px;top:117.91px;font-size:10.5px;line-height:10.5px;font-weight:normal;color:#2b2b2b;">All Users</div>
<div class="t n" style="left:152.20px;top:117.91px;font-size:10.5px;line-height:10.5px;font-weight:normal;color:#2b2b2b;">Sep 25</div>
<div class="t n" style="left:258.50px;top:117.91px;font-size:10.5px;line-height:10.5px;font-weight:normal;color:#2b2b2b;">1,000</div>
<div class="t" style="left:363.00px;top:117.82px;font-size:10.6px;line-height:10.6px;font-weight:bold;color:#eaf5ff;">*100%</div>
<div class="t n" style="left:470.00px;top:117.91px;font-size:10.5px;line-height:10.5px;font-weight:normal;color:#2b2b2b;width:86.50px;overflow:hidden;text-overflow:ellipsis;">*0.600% (6 Users)</div>
<div class="b" style="left:4.80px;top:152.60px;width:14.50px;height:14.50px;background:#fff;border:1.2px solid #7f8185;border-radius:2px;box-sizing:border-box;"></div>
<svg class="b" style="left:47.00px;top:153.30px" width="12" height="12" viewBox="0 0 12 12"><circle cx="6" cy="6" r="5" fill="#8c8d90"/></svg>
<div class="t n" style="left:67.00px;top:153.11px;font-size:10.5px;line-height:10.5px;font-weight:normal;color:#2b2b2b;">All Users</div>
<div class="t n" style="left:152.20px;top:153.11px;font-size:10.5px;line-height:10.5px;font-weight:normal;color:#2b2b2b;">Sep 18</div>
<div class="t n" style="left:258.50px;top:153.11px;font-size:10.5px;line-height:10.5px;font-weight:normal;color:#2b2b2b;">460</div>
<div class="t" style="left:363.00px;top:153.02px;font-size:10.6px;line-height:10.6px;font-weight:bold;color:#eaf5ff;">100%</div>
<div class="t n" style="left:470.00px;top:153.11px;font-size:10.5px;line-height:10.5px;font-weight:normal;color:#2b2b2b;width:86.50px;overflow:hidden;text-overflow:ellipsis;">*6.96% (32 Users)</div>
<div class="t n" style="left:576.00px;top:153.11px;font-size:10.5px;line-height:10.5px;font-weight:normal;color:#2b2b2b;width:86.50px;overflow:hidden;text-overflow:ellipsis;">*0.217% (1 Users)</div>
<div class="b" style="left:4.80px;top:187.80px;width:14.50px;height:14.50px;background:#fff;border:1.2px solid #7f8185;border-radius:2px;box-sizing:border-box;"></div>
<svg class="b" style="left:47.00px;top:188.50px" width="12" height="12" viewBox="0 0 12 12"><circle cx="6" cy="6" r="5" fill="#8c8d90"/></svg>
<div class="t n" style="left:67.00px;top:188.31px;font-size:10.5px;line-height:10.5px;font-weight:normal;color:#2b2b2b;">All Users</div>
<div class="t n" style="left:152.20px;top:188.31px;font-size:10.5px;line-height:10.5px;font-weight:normal;color:#2b2b2b;">Sep 11</div>
<div class="t n" style="left:258.50px;top:188.31px;font-size:10.5px;line-height:10.5px;font-weight:normal;color:#2b2b2b;">1,000</div>
<div class="t" style="left:363.00px;top:188.22px;font-size:10.6px;line-height:10.6px;font-weight:bold;color:#eaf5ff;">100%</div>
<div class="t n" style="left:470.00px;top:188.31px;font-size:10.5px;line-height:10.5px;font-weight:normal;color:#2b2b2b;width:86.50px;overflow:hidden;text-overflow:ellipsis;">20.6% (206 Users)</div>
<div class="t n" style="left:576.00px;top:188.31px;font-size:10.5px;line-height:10.5px;font-weight:normal;color:#2b2b2b;width:86.50px;overflow:hidden;text-overflow:ellipsis;">*12.5% (125 Users)</div>
<div class="t n" style="left:681.00px;top:188.31px;font-size:10.5px;line-height:10.5px;font-weight:normal;color:#2b2b2b;width:86.50px;overflow:hidden;text-overflow:ellipsis;">*1.80% (18 Users)</div>
<div class="b" style="left:4.80px;top:223.00px;width:14.50px;height:14.50px;background:#fff;border:1.2px solid #7f8185;border-radius:2px;box-sizing:border-box;"></div>
<svg class="b" style="left:47.00px;top:223.70px" width="12" height="12" viewBox="0 0 12 12"><circle cx="6" cy="6" r="5" fill="#8c8d90"/></svg>
<div class="t n" style="left:67.00px;top:223.51px;font-size:10.5px;line-height:10.5px;font-weight:normal;color:#2b2b2b;">All Users</div>
<div class="t n" style="left:152.20px;top:223.51px;font-size:10.5px;line-height:10.5px;font-weight:normal;color:#2b2b2b;">Sep 04</div>
<div class="t n" style="left:258.50px;top:223.51px;font-size:10.5px;line-height:10.5px;font-weight:normal;color:#2b2b2b;">877</div>
<div class="t" style="left:363.00px;top:223.42px;font-size:10.6px;line-height:10.6px;font-weight:bold;color:#eaf5ff;">100%</div>
<div class="t n" style="left:470.00px;top:223.51px;font-size:10.5px;line-height:10.5px;font-weight:normal;color:#2b2b2b;width:86.50px;overflow:hidden;text-overflow:ellipsis;">18.5% (162 Users)</div>
<div class="t n" style="left:576.00px;top:223.51px;font-size:10.5px;line-height:10.5px;font-weight:normal;color:#2b2b2b;width:86.50px;overflow:hidden;text-overflow:ellipsis;">14.1% (124 Users)</div>
<div class="t n" style="left:681.00px;top:223.51px;font-size:10.5px;line-height:10.5px;font-weight:normal;color:#2b2b2b;width:86.50px;overflow:hidden;text-overflow:ellipsis;">*8.55% (75 Users)</div>
<div class="t n" style="left:787.00px;top:223.51px;font-size:10.5px;line-height:10.5px;font-weight:normal;color:#2b2b2b;width:86.50px;overflow:hidden;text-overflow:ellipsis;">*0.456% (4 Users)</div>
<div class="b" style="left:4.80px;top:258.20px;width:14.50px;height:14.50px;background:#fff;border:1.2px solid #7f8185;border-radius:2px;box-sizing:border-box;"></div>
<svg class="b" style="left:47.00px;top:258.90px" width="12" height="12" viewBox="0 0 12 12"><circle cx="6" cy="6" r="5" fill="#8c8d90"/></svg>
<div class="t n" style="left:67.00px;top:258.71px;font-size:10.5px;line-height:10.5px;font-weight:normal;color:#2b2b2b;">All Users</div>
<div class="t n" style="left:152.20px;top:258.71px;font-size:10.5px;line-height:10.5px;font-weight:normal;color:#2b2b2b;">Aug 28</div>
<div class="t n" style="left:258.50px;top:258.71px;font-size:10.5px;line-height:10.5px;font-weight:normal;color:#2b2b2b;">460</div>
<div class="t" style="left:363.00px;top:258.62px;font-size:10.6px;line-height:10.6px;font-weight:bold;color:#eaf5ff;">100%</div>
<div class="t n" style="left:470.00px;top:258.71px;font-size:10.5px;line-height:10.5px;font-weight:normal;color:#2b2b2b;width:86.50px;overflow:hidden;text-overflow:ellipsis;">20.7% (95 Users)</div>
<div class="t n" style="left:576.00px;top:258.71px;font-size:10.5px;line-height:10.5px;font-weight:normal;color:#2b2b2b;width:86.50px;overflow:hidden;text-overflow:ellipsis;">15.9% (73 Users)</div>
<div class="t n" style="left:681.00px;top:258.71px;font-size:10.5px;line-height:10.5px;font-weight:normal;color:#2b2b2b;width:86.50px;overflow:hidden;text-overflow:ellipsis;">13.0% (60 Users)</div>
<div class="t n" style="left:787.00px;top:258.71px;font-size:10.5px;line-height:10.5px;font-weight:normal;color:#2b2b2b;width:86.50px;overflow:hidden;text-overflow:ellipsis;">*8.04% (37 Users)</div>
<div class="t n" style="left:893.00px;top:258.71px;font-size:10.5px;line-height:10.5px;font-weight:normal;color:#2b2b2b;width:86.50px;overflow:hidden;text-overflow:ellipsis;">*0.652% (3 Users)</div>
<div class="b" style="left:4.80px;top:293.40px;width:14.50px;height:14.50px;background:#fff;border:1.2px solid #7f8185;border-radius:2px;box-sizing:border-box;"></div>
<svg class="b" style="left:47.00px;top:294.10px" width="12" height="12" viewBox="0 0 12 12"><circle cx="6" cy="6" r="5" fill="#8c8d90"/></svg>
<div class="t n" style="left:67.00px;top:293.91px;font-size:10.5px;line-height:10.5px;font-weight:normal;color:#2b2b2b;">All Users</div>
<div class="t n" style="left:152.20px;top:293.91px;font-size:10.5px;line-height:10.5px;font-weight:normal;color:#2b2b2b;">Aug 21</div>
<div class="t n" style="left:258.50px;top:293.91px;font-size:10.5px;line-height:10.5px;font-weight:normal;color:#2b2b2b;">355</div>
<div class="t" style="left:363.00px;top:293.82px;font-size:10.6px;line-height:10.6px;font-weight:bold;color:#eaf5ff;">100%</div>
<div class="t n" style="left:470.00px;top:293.91px;font-size:10.5px;line-height:10.5px;font-weight:normal;color:#2b2b2b;width:86.50px;overflow:hidden;text-overflow:ellipsis;">18.0% (64 Users)</div>
<div class="t n" style="left:576.00px;top:293.91px;font-size:10.5px;line-height:10.5px;font-weight:normal;color:#2b2b2b;width:86.50px;overflow:hidden;text-overflow:ellipsis;">15.8% (56 Users)</div>
<div class="t n" style="left:681.00px;top:293.91px;font-size:10.5px;line-height:10.5px;font-weight:normal;color:#2b2b2b;width:86.50px;overflow:hidden;text-overflow:ellipsis;">14.1% (50 Users)</div>
<div class="t n" style="left:787.00px;top:293.91px;font-size:10.5px;line-height:10.5px;font-weight:normal;color:#2b2b2b;width:86.50px;overflow:hidden;text-overflow:ellipsis;">11.0% (39 Users)</div>
<div class="t n" style="left:893.00px;top:293.91px;font-size:10.5px;line-height:10.5px;font-weight:normal;color:#2b2b2b;width:86.50px;overflow:hidden;text-overflow:ellipsis;">*6.76% (24 Users)</div>
<div class="t n" style="left:998.00px;top:293.91px;font-size:10.5px;line-height:10.5px;font-weight:normal;color:#2b2b2b;width:200.00px;overflow:hidden;text-overflow:ellipsis;">*0.00% (0 Users)</div>
<div class="b" style="left:4.80px;top:328.60px;width:14.50px;height:14.50px;background:#fff;border:1.2px solid #7f8185;border-radius:2px;box-sizing:border-box;"></div>
<svg class="b" style="left:47.00px;top:329.30px" width="12" height="12" viewBox="0 0 12 12"><circle cx="6" cy="6" r="5" fill="#8c8d90"/></svg>
<div class="t n" style="left:67.00px;top:329.11px;font-size:10.5px;line-height:10.5px;font-weight:normal;color:#2b2b2b;">All Users</div>
<div class="t n" style="left:152.20px;top:329.11px;font-size:10.5px;line-height:10.5px;font-weight:normal;color:#2b2b2b;">Aug 14</div>
<div class="t n" style="left:258.50px;top:329.11px;font-size:10.5px;line-height:10.5px;font-weight:normal;color:#2b2b2b;">310</div>
<div class="t" style="left:363.00px;top:329.02px;font-size:10.6px;line-height:10.6px;font-weight:bold;color:#eaf5ff;">100%</div>
<div class="t n" style="left:470.00px;top:329.11px;font-size:10.5px;line-height:10.5px;font-weight:normal;color:#2b2b2b;width:86.50px;overflow:hidden;text-overflow:ellipsis;">25.5% (79 Users)</div>
<div class="t n" style="left:576.00px;top:329.11px;font-size:10.5px;line-height:10.5px;font-weight:normal;color:#2b2b2b;width:86.50px;overflow:hidden;text-overflow:ellipsis;">21.6% (67 Users)</div>
<div class="t n" style="left:681.00px;top:329.11px;font-size:10.5px;line-height:10.5px;font-weight:normal;color:#2b2b2b;width:86.50px;overflow:hidden;text-overflow:ellipsis;">20.0% (62 Users)</div>
<div class="t n" style="left:787.00px;top:329.11px;font-size:10.5px;line-height:10.5px;font-weight:normal;color:#2b2b2b;width:86.50px;overflow:hidden;text-overflow:ellipsis;">15.2% (47 Users)</div>
<div class="t n" style="left:893.00px;top:329.11px;font-size:10.5px;line-height:10.5px;font-weight:normal;color:#2b2b2b;width:86.50px;overflow:hidden;text-overflow:ellipsis;">11.3% (35 Users)</div>
<div class="t n" style="left:998.00px;top:329.11px;font-size:10.5px;line-height:10.5px;font-weight:normal;color:#2b2b2b;width:200.00px;overflow:hidden;text-overflow:ellipsis;">*7.74% (24 Users)</div>
<div class="b" style="left:4.80px;top:363.80px;width:14.50px;height:14.50px;background:#fff;border:1.2px solid #7f8185;border-radius:2px;box-sizing:border-box;"></div>
<svg class="b" style="left:47.00px;top:364.50px" width="12" height="12" viewBox="0 0 12 12"><circle cx="6" cy="6" r="5" fill="#8c8d90"/></svg>
<div class="t n" style="left:67.00px;top:364.31px;font-size:10.5px;line-height:10.5px;font-weight:normal;color:#2b2b2b;">All Users</div>
<div class="t n" style="left:152.20px;top:364.31px;font-size:10.5px;line-height:10.5px;font-weight:normal;color:#2b2b2b;">Aug 07</div>
<div class="t n" style="left:258.50px;top:364.31px;font-size:10.5px;line-height:10.5px;font-weight:normal;color:#2b2b2b;">273</div>
<div class="t" style="left:363.00px;top:364.22px;font-size:10.6px;line-height:10.6px;font-weight:bold;color:#eaf5ff;">100%</div>
<div class="t n" style="left:470.00px;top:364.31px;font-size:10.5px;line-height:10.5px;font-weight:normal;color:#2b2b2b;width:86.50px;overflow:hidden;text-overflow:ellipsis;">41.0% (112 Users)</div>
<div class="t n" style="left:576.00px;top:364.31px;font-size:10.5px;line-height:10.5px;font-weight:normal;color:#2b2b2b;width:86.50px;overflow:hidden;text-overflow:ellipsis;">39.2% (107 Users)</div>
<div class="t n" style="left:681.00px;top:364.31px;font-size:10.5px;line-height:10.5px;font-weight:normal;color:#2b2b2b;width:86.50px;overflow:hidden;text-overflow:ellipsis;">35.2% (96 Users)</div>
<div class="t n" style="left:787.00px;top:364.31px;font-size:10.5px;line-height:10.5px;font-weight:normal;color:#2b2b2b;width:86.50px;overflow:hidden;text-overflow:ellipsis;">30.0% (82 Users)</div>
<div class="t n" style="left:893.00px;top:364.31px;font-size:10.5px;line-height:10.5px;font-weight:normal;color:#2b2b2b;width:86.50px;overflow:hidden;text-overflow:ellipsis;">25.6% (70 Users)</div>
<div class="t n" style="left:998.00px;top:364.31px;font-size:10.5px;line-height:10.5px;font-weight:normal;color:#2b2b2b;width:200.00px;overflow:hidden;text-overflow:ellipsis;">20.9% (57 Users)</div>
<div class="b" style="left:4.80px;top:399.00px;width:14.50px;height:14.50px;background:#fff;border:1.2px solid #7f8185;border-radius:2px;box-sizing:border-box;"></div>
<svg class="b" style="left:47.00px;top:399.70px" width="12" height="12" viewBox="0 0 12 12"><circle cx="6" cy="6" r="5" fill="#8c8d90"/></svg>
<div class="t n" style="left:67.00px;top:399.51px;font-size:10.5px;line-height:10.5px;font-weight:normal;color:#2b2b2b;">All Users</div>
<div class="t n" style="left:152.20px;top:399.51px;font-size:10.5px;line-height:10.5px;font-weight:normal;color:#2b2b2b;">Jul 31</div>
<div class="t n" style="left:258.50px;top:399.51px;font-size:10.5px;line-height:10.5px;font-weight:normal;color:#2b2b2b;">429</div>
<div class="t" style="left:363.00px;top:399.42px;font-size:10.6px;line-height:10.6px;font-weight:bold;color:#eaf5ff;">100%</div>
<div class="t n" style="left:470.00px;top:399.51px;font-size:10.5px;line-height:10.5px;font-weight:normal;color:#2b2b2b;width:86.50px;overflow:hidden;text-overflow:ellipsis;">44.5% (191 Users)</div>
<div class="t n" style="left:576.00px;top:399.51px;font-size:10.5px;line-height:10.5px;font-weight:normal;color:#2b2b2b;width:86.50px;overflow:hidden;text-overflow:ellipsis;">42.2% (181 Users)</div>
<div class="t n" style="left:681.00px;top:399.51px;font-size:10.5px;line-height:10.5px;font-weight:normal;color:#2b2b2b;width:86.50px;overflow:hidden;text-overflow:ellipsis;">40.1% (172 Users)</div>
<div class="t n" style="left:787.00px;top:399.51px;font-size:10.5px;line-height:10.5px;font-weight:normal;color:#2b2b2b;width:86.50px;overflow:hidden;text-overflow:ellipsis;">37.3% (160 Users)</div>
<div class="t n" style="left:893.00px;top:399.51px;font-size:10.5px;line-height:10.5px;font-weight:normal;color:#2b2b2b;width:86.50px;overflow:hidden;text-overflow:ellipsis;">33.1% (142 Users)</div>
<div class="t n" style="left:998.00px;top:399.51px;font-size:10.5px;line-height:10.5px;font-weight:normal;color:#2b2b2b;width:200.00px;overflow:hidden;text-overflow:ellipsis;">29.4% (126 Users)</div>
<div class="b" style="left:4.80px;top:434.20px;width:14.50px;height:14.50px;background:#fff;border:1.2px solid #7f8185;border-radius:2px;box-sizing:border-box;"></div>
<svg class="b" style="left:47.00px;top:434.90px" width="12" height="12" viewBox="0 0 12 12"><circle cx="6" cy="6" r="5" fill="#8c8d90"/></svg>
<div class="t n" style="left:67.00px;top:434.71px;font-size:10.5px;line-height:10.5px;font-weight:normal;color:#2b2b2b;">All Users</div>
<div class="t n" style="left:152.20px;top:434.71px;font-size:10.5px;line-height:10.5px;font-weight:normal;color:#2b2b2b;">Jul 24</div>
<div class="t n" style="left:258.50px;top:434.71px;font-size:10.5px;line-height:10.5px;font-weight:normal;color:#2b2b2b;">512</div>
<div class="t" style="left:363.00px;top:434.62px;font-size:10.6px;line-height:10.6px;font-weight:bold;color:#eaf5ff;">100%</div>
<div class="t n" style="left:470.00px;top:434.71px;font-size:10.5px;line-height:10.5px;font-weight:normal;color:#2b2b2b;width:86.50px;overflow:hidden;text-overflow:ellipsis;">62.0% (318 Users)</div>
<div class="t n" style="left:576.00px;top:434.71px;font-size:10.5px;line-height:10.5px;font-weight:normal;color:#2b2b2b;width:86.50px;overflow:hidden;text-overflow:ellipsis;">58.1% (298 Users)</div>
<div class="t n" style="left:681.00px;top:434.71px;font-size:10.5px;line-height:10.5px;font-weight:normal;color:#2b2b2b;width:86.50px;overflow:hidden;text-overflow:ellipsis;">56.0% (287 Users)</div>
<div class="t n" style="left:787.00px;top:434.71px;font-size:10.5px;line-height:10.5px;font-weight:normal;color:#2b2b2b;width:86.50px;overflow:hidden;text-overflow:ellipsis;">53.0% (271 Users)</div>
<div class="t n" style="left:893.00px;top:434.71px;font-size:10.5px;line-height:10.5px;font-weight:normal;color:#2b2b2b;width:86.50px;overflow:hidden;text-overflow:ellipsis;">50.1% (256 Users)</div>
<div class="t n" style="left:998.00px;top:434.71px;font-size:10.5px;line-height:10.5px;font-weight:normal;color:#2b2b2b;width:200.00px;overflow:hidden;text-overflow:ellipsis;">47.3% (242 Users)</div>
</div>
<div class="b" style="left:1434px;top:578.5px;width:12px;height:391px;background:#fff;"></div>
<div class="b" style="left:1446px;top:542px;width:1px;height:427px;background:#dcdfe2;"></div>
<div class="b" style="left:1437px;top:581.5px;width:6px;height:381px;background:#c6c7c9;border-radius:3px;"></div>
<div class="b" style="left:1419px;top:963px;width:60px;height:20px;background:#f4f4f4;border:1px solid #cfcfcf;overflow:hidden;"><div class="t" style="left:6px;top:1px;font-size:11px;line-height:11px;color:#222;">Clevergy</div></div>
</body></html>
